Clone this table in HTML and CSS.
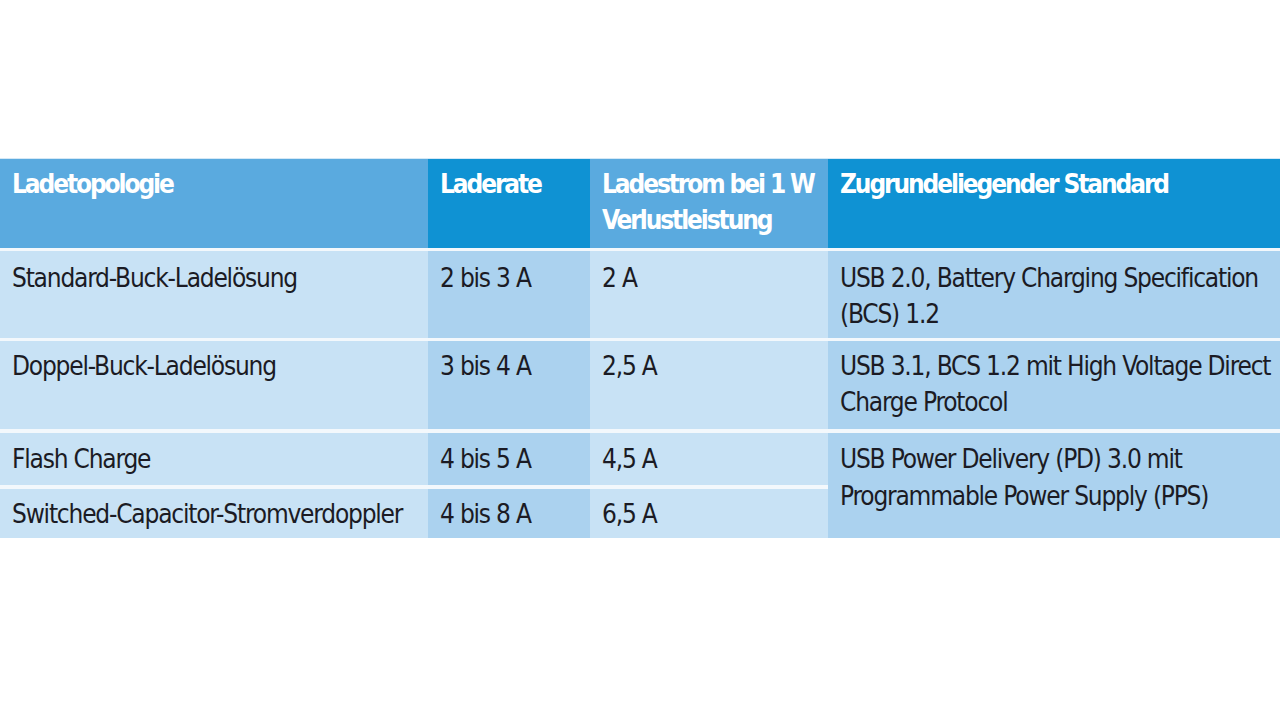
FILE: index.html
```html
<!DOCTYPE html>
<html lang="de">
<head>
<meta charset="utf-8">
<title>Ladetopologien</title>
<link rel="stylesheet" href="styles.css">
</head>
<body>
<div class="page">
  <table class="tbl">
    <colgroup>
      <col class="c1"><col class="c2"><col class="c3"><col class="c4">
    </colgroup>
    <thead>
      <tr class="head">
        <th class="light">Ladetopologie</th>
        <th class="dark">Laderate</th>
        <th class="light">Ladestrom bei 1&nbsp;W<br>Verlustleistung</th>
        <th class="dark">Zugrundeliegender Standard</th>
      </tr>
    </thead>
    <tbody>
      <tr class="r1">
        <td class="light">Standard-Buck-Ladelösung</td>
        <td class="dark">2 bis 3 A</td>
        <td class="light">2 A</td>
        <td class="dark">USB 2.0, Battery Charging Specification<br>(BCS) 1.2</td>
      </tr>
      <tr class="r2">
        <td class="light">Doppel-Buck-Ladelösung</td>
        <td class="dark">3 bis 4 A</td>
        <td class="light">2,5 A</td>
        <td class="dark">USB 3.1, BCS 1.2 mit High Voltage Direct<br>Charge Protocol</td>
      </tr>
      <tr class="r3">
        <td class="light">Flash Charge</td>
        <td class="dark">4 bis 5 A</td>
        <td class="light">4,5 A</td>
        <td class="dark span" rowspan="2">USB Power Delivery (PD) 3.0 mit<br>Programmable Power Supply (PPS)</td>
      </tr>
      <tr class="r4">
        <td class="light">Switched-Capacitor-Stromverdoppler</td>
        <td class="dark">4 bis 8 A</td>
        <td class="light">6,5 A</td>
      </tr>
    </tbody>
  </table>
</div>
</body>
</html>
```
FILE: styles.css
```css
html, body {
  margin: 0;
  padding: 0;
  background: #ffffff;
}
.page {
  padding-top: 158px;
  width: 1280px;
}
.tbl {
  width: 1280px;
  border-collapse: separate;
  border-spacing: 0;
  table-layout: fixed;
  font-family: "DejaVu Sans Condensed", "DejaVu Sans", sans-serif;
  font-stretch: condensed;
  font-size: 26px;
  line-height: 36px;
  letter-spacing: -1.2px;
}
.c1 { width: 428px; }
.c2 { width: 162px; }
.c3 { width: 238px; }
.c4 { width: 452px; }
.tbl th, .tbl td {
  text-align: left;
  vertical-align: top;
  padding: 8px 6px 0 12px;
  box-sizing: border-box;
  white-space: nowrap;
}
.head th {
  height: 90px;
  color: #ffffff;
  font-weight: bold;
  letter-spacing: -2.1px;
  border-top: 1px solid #d4e8f6;
  padding-top: 7px;
}
.head th.light { background: #5aaadf; }
.head th.dark { background: #0f92d3; }
.tbl td {
  color: #1b1b24;
  border-top: 3px solid #f3f8fc;
}
.tbl td.light { background: #c8e2f5; }
.tbl td.dark { background: #abd2ef; }
.r1 td { height: 90px; padding-top: 9px; }
.r2 td { height: 91px; padding-top: 7px; }
.r3 td { height: 56px; border-top-width: 4px; }
.r4 td { height: 53px; border-top-width: 4px; padding-top: 7px; }
.tbl td.span { line-height: 37px; }
```
